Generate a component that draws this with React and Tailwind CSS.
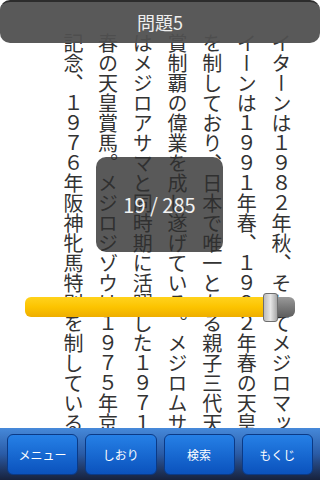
import React from 'react';

const columns = [
    'イターンは１９８２年秋、そしてメジロマッ',
    'イーンは１９９１年春、１９９２年春の天皇',
    'を制しており、日本で唯一となる親子三代天',
    '賞制覇の偉業を成し遂げている。メジロムサ',
    'はメジロアサマと同時期に活躍した１９７１',
    '春の天皇賞馬。メジロジゾウは１９７５年京',
    '記念、１９７６年阪神牝馬特別を制している',
];

const buttons = ['メニュー', 'しおり', '検索', 'もくじ'];

const jp = { fontFamily: '"Noto Sans CJK JP", "Noto Sans", sans-serif' };

const App = () => {
    return (
        <div className="relative w-[320px] h-[480px] overflow-hidden bg-white" style={jp}>
            {/* Vertical body text */}
            <div className="flex flex-row-reverse pt-[33px] pr-[22px]">
                {columns.map((col, i) => (
                    <div
                        key={i}
                        className="w-[34.7px] h-[400px] [writing-mode:vertical-rl] text-[20px] leading-[34.7px] text-[#333333] whitespace-nowrap"
                    >
                        {col}
                    </div>
                ))}
            </div>

            {/* Title bar */}
            <div className="absolute top-0 left-0 right-0 h-[43px] rounded-[10px] border-t-2 border-[#2c2c2c] bg-[#505050]/95 flex items-center justify-center">
                <span className="text-[18px] text-[#eeeeee]">問題5</span>
            </div>

            {/* Page indicator */}
            <div className="absolute left-[96px] top-[157px] w-[127px] h-[95px] rounded-[10px] bg-[#303030]/80 flex items-center justify-center">
                <span className="text-[20px] text-[#f2f2f2]">19 / 285</span>
            </div>

            {/* Slider */}
            <div className="absolute left-[25px] top-[297px] w-[270px] h-[20px] flex">
                <div className="w-[242px] h-full rounded-l-[6px] bg-linear-to-b from-[#ffd21a] via-[#fcc400] to-[#eeae00]" />
                <div className="flex-1 h-full rounded-r-[6px] bg-linear-to-b from-[#9a9a9a] via-[#7a7a7a] to-[#5e5e5e]" />
            </div>
            <div className="absolute left-[263px] top-[293px] w-[15px] h-[29px] rounded-[3px] border border-[#6e6e6e] bg-linear-to-r from-[#bcbcbc] via-[#e6e6e6] to-[#a8a8a8]" />

            {/* Bottom toolbar */}
            <div className="absolute left-0 right-0 bottom-0 h-[52px] bg-linear-to-b from-[#4689da] via-[#2a5ba6] to-[#17223d] flex gap-[7px] px-[7px] pt-[6px]">
                {buttons.map((label) => (
                    <button
                        key={label}
                        className="flex-1 h-[41px] rounded-[6px] border border-[#0b3a86] bg-linear-to-b from-[#2680e6] to-[#0b52bd] text-white text-[12px] flex items-center justify-center"
                    >
                        {label}
                    </button>
                ))}
            </div>
        </div>
    );
};

export default App;
